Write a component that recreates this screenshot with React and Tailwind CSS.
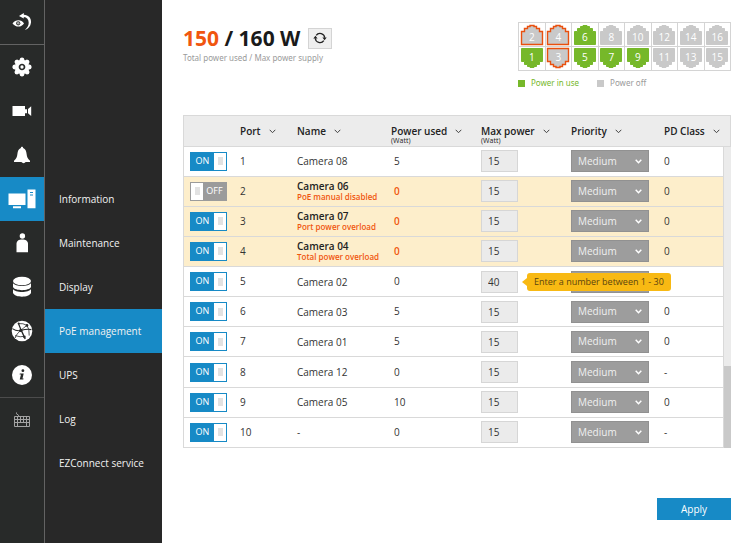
import React, { useState } from "react";

const PORT_ROWS = [
  [2, 4, 6, 8, 10, 12, 14, 16],
  [1, 3, 5, 7, 9, 11, 13, 15],
];

const PORT_STATE = { 1: "on", 5: "on", 6: "on", 7: "on", 9: "on", 2: "alert", 3: "alert", 4: "alert" };

const CAMERAS = [
  { port: 1, name: "Camera 08", used: 5, max: 15, pd: "0", on: true },
  { port: 2, name: "Camera 06", error: "PoE manual disabled", used: 0, max: 15, pd: "0", on: false },
  { port: 3, name: "Camera 07", error: "Port power overload", used: 0, max: 15, pd: "0", on: true },
  { port: 4, name: "Camera 04", error: "Total power overload", used: 0, max: 15, pd: "0", on: true },
  { port: 5, name: "Camera 02", used: 0, max: 40, pd: "", on: true, hint: "Enter a number between 1 - 30" },
  { port: 6, name: "Camera 03", used: 5, max: 15, pd: "0", on: true },
  { port: 7, name: "Camera 01", used: 5, max: 15, pd: "0", on: true },
  { port: 8, name: "Camera 12", used: 0, max: 15, pd: "-", on: true },
  { port: 9, name: "Camera 05", used: 10, max: 15, pd: "0", on: true },
  { port: 10, name: "-", used: 0, max: 15, pd: "-", on: true },
];

const MENU = ["Information", "Maintenance", "Display", "PoE management", "UPS", "Log", "EZConnect service"];

const COLUMNS = [
  { label: "Port" },
  { label: "Name" },
  { label: "Power used", unit: "(Watt)" },
  { label: "Max power", unit: "(Watt)" },
  { label: "Priority" },
  { label: "PD Class" },
];

function LiveIcon() {
  return (
    <svg width="20" height="18" viewBox="0 0 20 18" fill="none">
      <path d="M0.5 10.5C3.5 6.3 9.5 6.3 12 10.5C9.5 14.6 3.5 14.6 0.5 10.5Z" fill="#fff" />
      <circle cx="6.2" cy="10.3" r="2.1" fill="#282a29" />
      <circle cx="6.2" cy="10.3" r="1.3" fill="#aaa" />
      <path d="M7 2.9L11.8 0V1.7C16.6 1.9 19.4 5.2 19 9.4C18.6 13.2 16.2 16 12.8 16.9C15.4 15 16.7 12.5 16.7 9.8C16.7 6.4 14.8 4.4 11.8 4.1V5.6Z" fill="#fff" />
    </svg>
  );
}

function GearIcon() {
  return (
    <svg width="20" height="20" viewBox="-10 -10 20 20">
      <g fill="#fff">
        <circle r="7.2" />
        {[0, 45, 90, 135, 180, 225, 270, 315].map((a) => (
          <path key={a} d="M-2.7 -6.3L-1.9 -8.8Q0 -10.4 1.9 -8.8L2.7 -6.3Z" transform={`rotate(${a})`} />
        ))}
      </g>
      <circle r="2.5" fill="none" stroke="#282a29" strokeWidth="1.7" />
    </svg>
  );
}

function VideoIcon() {
  return (
    <svg width="20" height="12" viewBox="0 0 20 12" fill="#fff">
      <path d="M0.5 1H13V4.2H15V8.2H13V11H0.5Z" />
      <path d="M16 4L19.2 1.2V11L16 8.3Z" />
    </svg>
  );
}

function BellIcon() {
  return (
    <svg width="18" height="18" viewBox="0 0 18 18" fill="#fff">
      <path d="M9 0.8C9.7 0.8 10.1 1.3 10.1 2C12.6 3 13.3 5.2 13.6 8C13.9 11 14.7 12.6 17 14.8V16H1V14.8C3.3 12.6 4.1 11 4.4 8C4.7 5.2 5.4 3 7.9 2C7.9 1.3 8.3 0.8 9 0.8Z" />
      <path d="M8.5 16H12.5C12 17.4 9.5 17.6 8.5 16Z" />
    </svg>
  );
}

function SystemIcon() {
  return (
    <svg width="28" height="20" viewBox="0 0 28 20">
      <path d="M0.5 4.5H17.5V16H0.5ZM5 17.2H13V19.2H5ZM19.5 0.5H27.5V19.2H19.5Z" fill="#fff" />
      <path d="M22 3.5H25M22 6H25" stroke="#178ac6" strokeWidth="1.2" />
    </svg>
  );
}

function PersonIcon() {
  return (
    <svg width="14" height="20" viewBox="0 0 14 20" fill="#fff">
      <circle cx="7.4" cy="3" r="2.7" />
      <path d="M1.5 19.2V11C1.5 8 3.8 6.6 7.2 6.6S13 8 13 11V19.2Z" />
    </svg>
  );
}

function DatabaseIcon() {
  return (
    <svg width="20" height="22" viewBox="0 0 20 22" fill="#fff">
      <ellipse cx="10" cy="5" rx="9" ry="4.3" />
      <path d="M1 7C3 11 17 11 19 7V11C17 15.2 3 15.2 1 11Z" />
      <path d="M1 13C3 17 17 17 19 13V17C17 21.9 3 21.9 1 17Z" />
    </svg>
  );
}

function NetworkIcon() {
  return (
    <svg width="22" height="22" viewBox="0 0 22 22">
      <circle cx="11" cy="11" r="10.3" fill="#fff" />
      <g fill="none" stroke="#282a29">
        <path strokeWidth="1.3" d="M7.6 3.6C8.5 7 10 9.5 14.2 19" />
        <path strokeWidth="1.1" d="M1.4 8.6C5 11 7 11.2 9.8 10.4C13.6 9.4 17 8.6 20.4 9.6" />
        <path strokeWidth="0.8" d="M16 5.4C13.6 7 11.4 9 9.8 10.4C7.2 12.6 4.8 15.2 4.2 18M7.6 3.6Q12 3 16 5.4Q18.6 9 18.2 15.6M4.2 15.6Q9 17.6 14.4 16.2" />
      </g>
      <g fill="#282a29">
        <circle cx="7.6" cy="3.6" r="1" />
        <circle cx="16" cy="5.4" r="1.3" />
        <circle cx="9.8" cy="10.4" r="1.6" />
        <circle cx="13.4" cy="17" r="1.2" />
      </g>
    </svg>
  );
}

function InfoIcon() {
  return (
    <svg width="20" height="20" viewBox="0 0 20 20">
      <circle cx="10" cy="10" r="10" fill="#fff" />
      <circle cx="10.9" cy="5.7" r="1.4" fill="#282a29" />
      <path d="M7.8 8.4H11.7L10.5 13.4H11.6L11.3 14.6H7.7L9 9.6H7.6Z" fill="#282a29" />
    </svg>
  );
}

function KeyboardIcon() {
  return (
    <svg width="18" height="16" viewBox="0 0 18 16" fill="none" stroke="#a3a3a3">
      <path d="M5.5 4.5V3.2L3.5 1.8V0.5" />
      <path d="M1.5 4.5H16.5V14.5H1.5ZM1.5 7.5H16.5M1.5 10.5H16.5M4.5 4.5V14.5M7.5 4.5V10.5M10.5 4.5V10.5M13.5 4.5V14.5" />
    </svg>
  );
}

function RefreshIcon() {
  return (
    <svg width="14" height="14" viewBox="0 0 14 14">
      <g fill="none" stroke="#222" strokeWidth="1.3">
        <path d="M3.2 4.4A4.7 4.7 0 0 1 11.7 6.8" />
        <path d="M10.8 9.6A4.7 4.7 0 0 1 2.3 7.2" />
      </g>
      <path d="M9.4 6.5H13.7L11.6 9.2ZM0.3 7.5H4.6L2.4 4.8Z" fill="#222" />
    </svg>
  );
}

function Chevron({ className }) {
  return (
    <svg className={className} width="7" height="5" viewBox="0 0 7 5" fill="none" stroke="currentColor">
      <path d="M0.7 0.8L3.5 3.7L6.3 0.8" />
    </svg>
  );
}

const RAIL = [
  { label: "Settings", Icon: GearIcon },
  { label: "Camera", Icon: VideoIcon },
  { label: "Events", Icon: BellIcon },
  { label: "System", Icon: SystemIcon, active: true },
  { label: "Users", Icon: PersonIcon },
  { label: "Storage", Icon: DatabaseIcon },
  { label: "Network", Icon: NetworkIcon },
  { label: "About", Icon: InfoIcon },
];

function RailButton({ label, Icon, active }) {
  return (
    <button
      type="button"
      aria-label={label}
      className={`flex h-11 w-full items-center justify-center ${active ? "bg-[#178ac6]" : ""}`}
    >
      <Icon />
    </button>
  );
}

function PortPlug({ number, flipped }) {
  const state = PORT_STATE[number];
  const fill = state === "on" ? "#76b82a" : "#c9c9c9";
  return (
    <div className={`flex h-6 justify-center border-r border-b border-[#d4d4d4] ${flipped ? "items-start" : "items-end"}`}>
      <div className="grid">
        <svg
          className={`col-start-1 row-start-1 ${flipped ? "rotate-180" : ""}`}
          width="24"
          height="23"
          viewBox="0 0 24 23"
        >
          <path
            d="M1.5 8.5H4.5V5.5H7.5V3.5H10V2.5H14V3.5H16.5V5.5H19.5V8.5H22.5V21.5H1.5Z"
            fill={fill}
            stroke={state === "alert" ? "#e9500e" : fill}
            strokeWidth={state === "alert" ? 1.4 : 1}
          />
        </svg>
        <span className={`z-10 col-start-1 row-start-1 self-center text-center text-[10px] leading-3 text-white ${flipped ? "pb-1" : "pt-1"}`}>
          {number}
        </span>
      </div>
    </div>
  );
}

function Toggle({ port, initial }) {
  const [on, setOn] = useState(initial);
  const grip = (
    <span className="flex w-3 items-center justify-center bg-white">
      <span className="h-2 w-[5px] bg-[#e2e2e2]" />
    </span>
  );
  return (
    <label className={`relative flex h-[19px] w-[37px] border text-[9px] leading-4 font-medium text-white ${on ? "border-[#178ac6] bg-[#178ac6]" : "border-[#9b9b9b] bg-[#9b9b9b]"}`}>
      <input
        type="checkbox"
        className="sr-only"
        aria-label={`Port ${port} power`}
        checked={on}
        onChange={(e) => setOn(e.target.checked)}
      />
      {!on && grip}
      <span className="flex-1 text-center">{on ? "ON" : "OFF"}</span>
      {on && grip}
    </label>
  );
}

function CameraRow({ port, name, error, used, max, pd, on, hint }) {
  return (
    <tr className={`border-b border-[#d9d9d9] ${error ? "bg-[#fdeecb]" : "bg-white"}`}>
      <td className="pl-[6px]">
        <Toggle port={port} initial={on} />
      </td>
      <td>{port}</td>
      <td className="leading-3">
        {error ? (
          <>
            <div className="font-semibold text-[#222]">{name}</div>
            <div className="text-[8px] leading-[10px] font-semibold whitespace-nowrap text-[#f0560f]">{error}</div>
          </>
        ) : (
          name
        )}
      </td>
      <td className={`pl-[3px] ${error ? "font-semibold text-[#f0560f]" : ""}`}>{used}</td>
      <td>
        <div className="relative flex items-center">
          <input
            type="text"
            aria-label={`Port ${port} max power`}
            defaultValue={max}
            className="h-[22px] w-[37px] border border-[#d6d6d6] bg-[#ebebeb] pl-[6px] text-[10px] text-[#333]"
          />
          {hint && (
            <div role="alert" className="absolute top-0.5 left-[41px] z-10 flex items-center">
              <svg width="5" height="8" viewBox="0 0 5 8" fill="#f8b913">
                <path d="M0 4L5 0V8Z" />
              </svg>
              <span className="rounded-[3px] bg-[#f8b913] px-[7px] text-[9px] leading-[18px] whitespace-nowrap text-[#5a4410]">
                {hint}
              </span>
            </div>
          )}
        </div>
      </td>
      <td>
        <div className="grid w-[78px] items-center">
          <select
            aria-label={`Port ${port} priority`}
            defaultValue="Medium"
            className="col-start-1 row-start-1 h-[22px] w-full appearance-none border border-[#919191] bg-[#9d9d9d] pl-[6px] text-[10px] text-[#f0f0f0]"
          >
            <option>Low</option>
            <option>Medium</option>
            <option>High</option>
          </select>
          <Chevron className="pointer-events-none col-start-1 row-start-1 mr-[7px] justify-self-end stroke-[1.5] text-white" />
        </div>
      </td>
      <td>{pd}</td>
    </tr>
  );
}

export default function App() {
  return (
    <div className="flex min-h-screen bg-white font-['Open_Sans','Noto_Sans',sans-serif] text-[10px] text-[#333]">
      <nav aria-label="Sections" className="w-[45px] shrink-0 border-r border-[#636363] bg-[#282a29]">
        <div className="border-b border-[#636363]">
          <RailButton label="Live view" Icon={LiveIcon} />
        </div>
        {RAIL.map((item) => (
          <RailButton key={item.label} {...item} />
        ))}
        <div className="border-t border-[#4c4c4c]">
          <RailButton label="Keyboard" Icon={KeyboardIcon} />
        </div>
      </nav>

      <nav aria-label="System" className="w-[117px] shrink-0 bg-[#282828] pt-[177px]">
        {MENU.map((label) => (
          <a
            key={label}
            href="#"
            className={`flex h-11 items-center pl-[14px] text-[#f2f2f2] ${label === "PoE management" ? "bg-[#178ac6]" : ""}`}
          >
            {label}
          </a>
        ))}
      </nav>

      <main className="flex min-w-0 flex-1 flex-col px-[22px] pt-[22px] pl-[21px]">
        <header className="flex h-[93px] items-start justify-between">
          <div>
            <div className="flex items-center gap-2 pt-0.5">
              <h1 className="text-[21px] leading-7 font-bold text-[#1a1a1a]">
                <span className="text-[#f0560f]">150</span> / 160 W
              </h1>
              <button
                type="button"
                aria-label="Refresh"
                className="flex h-[21px] w-6 items-center justify-center border border-[#d4d4d4] bg-[#efefef]"
              >
                <RefreshIcon />
              </button>
            </div>
            <p className="font-['Noto_Sans',sans-serif] text-[8px] leading-3 text-[#9a9a9a]">
              Total power used / Max power supply
            </p>
          </div>

          <div className="w-[213px]">
            <div className="border-t border-l border-[#d4d4d4]">
              {PORT_ROWS.map((row, i) => (
                <div key={i} className="grid grid-cols-8">
                  {row.map((n) => (
                    <PortPlug key={n} number={n} flipped={i === 1} />
                  ))}
                </div>
              ))}
            </div>
            <div className="flex gap-[18px] pt-[6px] font-['Noto_Sans',sans-serif] text-[8px] leading-3">
              <span className="flex items-center gap-[6px] text-[#76b82a]">
                <i className="h-[7px] w-[7px] bg-[#76b82a]" />
                Power in use
              </span>
              <span className="flex items-center gap-[6px] text-[#9a9a9a]">
                <i className="h-[7px] w-[7px] bg-[#c9c9c9]" />
                Power off
              </span>
            </div>
          </div>
        </header>

        <div className="relative border-t border-l border-[#d9d9d9]">
          <table className="h-[332px] w-full table-fixed border-collapse text-left">
            <colgroup>
              <col className="w-[56px]" />
              <col className="w-[57px]" />
              <col className="w-[94px]" />
              <col className="w-[90px]" />
              <col className="w-[90px]" />
              <col className="w-[93px]" />
              <col />
            </colgroup>
            <thead>
              <tr className="h-[30px] border-r border-b border-[#d9d9d9] bg-[#ececec]">
                <th aria-label="Power" />
                {COLUMNS.map(({ label, unit }) => (
                  <th key={label} className="pt-[9px] align-top font-semibold whitespace-nowrap text-[#222]">
                    <div className="flex items-center gap-2 leading-3">
                      {label}
                      <Chevron className="text-[#444]" />
                    </div>
                    {unit && <div className="text-[7px] leading-[8px] font-normal">{unit}</div>}
                  </th>
                ))}
              </tr>
            </thead>
            <tbody>
              {CAMERAS.map((camera) => (
                <CameraRow key={camera.port} {...camera} />
              ))}
            </tbody>
          </table>
          <div className="absolute top-[31px] right-0 bottom-0 flex w-2 flex-col justify-end border-l border-[#d9d9d9] bg-[#ebebeb]">
            <div className="h-[82px] bg-[#c9c9c9]" />
          </div>
        </div>

        <button type="button" className="mt-[50px] h-[22px] w-[74px] self-end bg-[#178ac6] text-white">
          Apply
        </button>
      </main>
    </div>
  );
}
